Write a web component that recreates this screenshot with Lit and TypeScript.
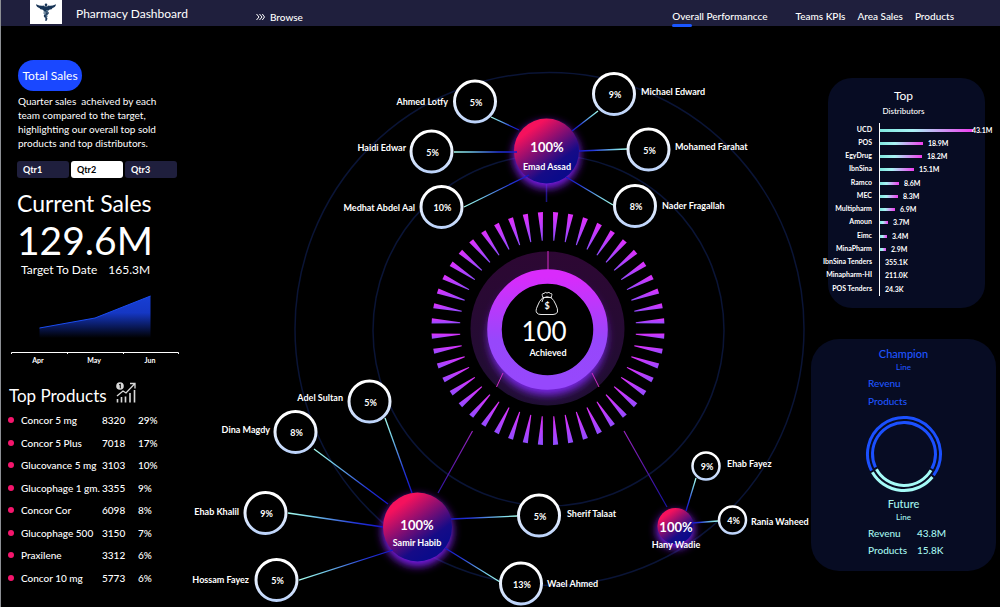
import { LitElement, html, svg, css } from "lit";
import { customElement, state } from "lit/decorators.js";

const FONT = css`Lato, "Open Sans", sans-serif`;

@customElement("top-bar")
class TopBar extends LitElement {
  static styles = css`
    :host { display: block; font-family: ${FONT}; color: #fff; }
    header { display: flex; align-items: center; height: 26px; background: #1f1f3d; padding: 0 46px 0 29px; }
    .logo { width: 32px; height: 24px; background: #fff; align-self: flex-start; }
    h1 { margin: 2px 0 0 14px; font-size: 12px; font-weight: 400; line-height: 16px; }
    .browse { display: flex; align-items: center; gap: 5px; margin: 8px 0 0 68px; }
    a { color: #fff; text-decoration: none; font-size: 10px; line-height: 14px; font-weight: 500; }
    nav { margin-left: auto; display: flex; align-items: flex-start; padding-top: 6px; gap: 12px; }
    .on { margin-right: 16px; }
    .on::after { content: ""; display: block; width: 20px; height: 3px; border-radius: 2px; background: #1a56ff; margin-top: 1px; margin-bottom: -4px; }
  `;
  render() {
    return html`<header>
      <svg class="logo" viewBox="0 0 32 24" aria-hidden="true">
        <g fill="#173456"><path d="M6 4.300 Q11 6.500 14 5.500 Q15 7 16 7 Q17 7 18 5.500 Q21 6.500 26 4.300 Q25.500 7.500 22.500 7.900 Q22 9.500 20 9.600 Q18 10.800 16.500 10 L15.500 10 Q14 10.800 12 9.600 Q10 9.500 9.500 7.900 Q6.500 7.500 6 4.300Z"/><circle cx="16" cy="4.800" r="1.300"/></g>
        <path d="M16 5V21M13.500 10.500Q20 12 17.500 14Q13 15 15 17Q18 18 16 20" fill="none" stroke="#173456" stroke-width="1.300"/>
        <path d="M18.500 10.500Q12 12 14.500 14Q18 15 17 17" fill="none" stroke="#3d6380" stroke-width="1"/>
      </svg>
      <h1>Pharmacy Dashboard</h1>
      <div class="browse">
        <svg width="9" height="8" viewBox="0 0 9 8" aria-hidden="true"><path d="M.5 1L3 4L.5 7M3.500 1L6 4L3.500 7M6.300 1L8.500 4L6.300 7" fill="none" stroke="#fff"/></svg>
        <a href="#browse">Browse</a>
      </div>
      <nav>
        <a class="on" href="#overall">Overall Performancce</a><a href="#teams">Teams KPIs</a><a href="#area">Area Sales</a><a href="#products">Products</a>
      </nav>
    </header>`;
  }
}

const PRODUCTS = [
  ["Concor 5 mg", "8320", "29%"], ["Concor 5 Plus", "7018", "17%"], ["Glucovance 5 mg", "3103", "10%"],
  ["Glucophage 1 gm.", "3355", "9%"], ["Concor Cor", "6098", "8%"], ["Glucophage 500", "3150", "7%"],
  ["Praxilene", "3312", "6%"], ["Concor 10 mg", "5773", "6%"],
];

@customElement("sales-panel")
class SalesPanel extends LitElement {
  @state() quarter = "Qtr2";
  static styles = css`
    :host { display: block; font-family: ${FONT}; color: #fff; }
    .pill { display: block; margin: 34px 0 0 17px; width: 64px; height: 31px; padding: 0; border: 0; border-radius: 16px; background: #1a48ff; color: #fff; font: 400 12px ${FONT}; white-space: nowrap; }
    .about { margin: 3px 0 0 17px; font-size: 10px; line-height: 14px; white-space: pre-line; }
    .tabs { display: flex; gap: 2px; margin: 11px 0 0 16px; }
    .tabs button { width: 52px; height: 17px; border: 0; border-radius: 3px; background: #1f1f3d; color: #fff; padding: 0 0 0 6px; text-align: left; font: 700 9px ${FONT}; }
    .tabs button.on { background: #fff; color: #000; }
    h2 { margin: 11px 0 0 16px; font-size: 23px; line-height: 28px; font-weight: 400; white-space: nowrap; }
    .big { margin: 2px 0 0 16px; font-size: 39px; line-height: 43px; white-space: nowrap; }
    .target { margin: 0 0 0 20px; font-size: 12px; line-height: 15px; display: flex; gap: 11px; white-space: nowrap; }
    .area { display: block; width: 170px; height: 63px; margin: 15px 0 0 9px; }
    .months { display: grid; grid-template-columns: repeat(3, 1fr); width: 168px; margin: 0 0 0 9px; text-align: center; font-size: 7px; line-height: 10px; font-weight: 700; }
    .head { display: flex; align-items: center; gap: 9px; margin: 17px 0 0 8px; }
    .head h2 { margin: 0; font-size: 17px; line-height: 24px; }
    .head svg { margin-bottom: 6px; }
    table { border-collapse: collapse; margin: 0 0 0 7px; font-size: 10px; }
    td, th { padding: 0; line-height: 22px; text-align: left; font-weight: 500; white-space: nowrap; }
    tr { height: 22px; }
    tr:nth-child(even) { height: 23px; }
    .dot { width: 13px; } .dot i { display: block; width: 6px; height: 6px; border-radius: 3px; background: #f5156c; }
    .name { width: 81px; } .qty { width: 36px; }
  `;
  render() {
    return html`
      <button class="pill">Total Sales</button>
      <p class="about">Quarter sales \u00a0acheived by each
team compared to the target,
highlighting our overall top sold
products and top distributors.</p>
      <div class="tabs">${["Qtr1", "Qtr2", "Qtr3"].map(q => html`<button class=${q === this.quarter ? "on" : ""} @click=${() => (this.quarter = q)}>${q}</button>`)}</div>
      <h2>Current Sales</h2>
      <div class="big">129.6M</div>
      <div class="target"><span>Target To Date</span><span>165.3M</span></div>
      <svg class="area" viewBox="0 0 170 63" aria-hidden="true">
        <defs><linearGradient id="a" x1="0" y1="0" x2="0" y2="1"><stop offset="0" stop-color="#173fd4"/><stop offset=".4" stop-color="#1537c4"/><stop offset="1" stop-color="#000"/></linearGradient></defs>
        <path d="M29.500 36L85 26L140.500 4V46H29.500Z" fill="url(#a)"/>
        <path d="M29.500 36L85 26L140.500 4" fill="none" stroke="#1a4cf0" stroke-width="1"/>
        <path d="M1.500 62V60.500H168.500V62M57.500 60V62M113.500 60V62" fill="none" stroke="#fff"/>
      </svg>
      <div class="months"><span>Apr</span><span>May</span><span>Jun</span></div>
      <div class="head"><h2>Top Products</h2>
        <svg width="20" height="21" viewBox="0 0 20 21" aria-hidden="true">
          <circle cx="4" cy="4" r="3.800" fill="#d9d9d9"/><path d="M3 3L4.300 2V6.300" fill="none" stroke="#000" stroke-width="1"/>
          <path d="M1 14L7 9L10 11L18.500 2M14 1.500H19V6.500" fill="none" stroke="#d9d9d9" stroke-width="1.300"/>
          <path d="M1.500 17V20.500M5.500 15V20.500M9.500 14.500V20.500M14 11V20.500M18.500 8V20.500" stroke="#d9d9d9" stroke-width="1.600"/>
        </svg></div>
      <table><tbody>${PRODUCTS.map(([n, q, p]) => html`<tr><td class="dot"><i></i></td><th class="name" scope="row">${n}</th><td class="qty">${q}</td><td>${p}</td></tr>`)}</tbody></table>`;
  }
}

interface Member { name: string; pct: string; x: number; y: number; r: number; lx: number; ly: number; end?: boolean; from: [number, number]; to: [number, number]; }
const MEMBERS: Member[] = [
  { name: "Ahmed Lotfy", pct: "5%", x: 475, y: 101.500, r: 20.500, lx: 448, ly: 105, end: true, from: [519, 130], to: [491, 117] },
  { name: "Haidi Edwar", pct: "5%", x: 431.500, y: 151.500, r: 20.500, lx: 406, ly: 151, end: true, from: [517, 152], to: [454, 152] },
  { name: "Medhat Abdel Aal", pct: "10%", x: 441.500, y: 207, r: 20.500, lx: 415, ly: 211, end: true, from: [529, 175], to: [464, 207] },
  { name: "Michael Edward", pct: "9%", x: 614, y: 94, r: 20.500, lx: 641, ly: 95, from: [572, 131], to: [598, 111] },
  { name: "Mohamed Farahat", pct: "5%", x: 648.500, y: 149.500, r: 20.500, lx: 675, ly: 150, from: [579, 151], to: [627, 149] },
  { name: "Nader Fragallah", pct: "8%", x: 635, y: 206, r: 20.500, lx: 662, ly: 209, from: [566, 177], to: [613, 205] },
  { name: "Adel Sultan", pct: "5%", x: 369.500, y: 401.500, r: 20.500, lx: 343, ly: 401, end: true, from: [412, 493], to: [385, 418] },
  { name: "Dina Magdy", pct: "8%", x: 295.500, y: 432, r: 20.500, lx: 270, ly: 433, end: true, from: [388, 504], to: [314, 449] },
  { name: "Ehab Khalil", pct: "9%", x: 265.500, y: 513, r: 20.500, lx: 239, ly: 515, end: true, from: [383, 527], to: [288, 513] },
  { name: "Hossam Fayez", pct: "5%", x: 276.500, y: 580, r: 20.500, lx: 249, ly: 583, end: true, from: [393, 550], to: [299, 580] },
  { name: "Sherif Talaat", pct: "5%", x: 539, y: 515.500, r: 20.500, lx: 567, ly: 517, from: [451, 519], to: [517, 516] },
  { name: "Wael Ahmed", pct: "13%", x: 521, y: 583.500, r: 20.500, lx: 547, ly: 587, from: [445, 548], to: [500, 582] },
  { name: "Ehab Fayez", pct: "9%", x: 706, y: 466, r: 13.500, lx: 727, ly: 467, from: [686, 511], to: [696, 478] },
  { name: "Rania Waheed", pct: "4%", x: 732.500, y: 520, r: 13.500, lx: 751, ly: 525, from: [692, 523], to: [718, 521] },
];
const LEADS = [
  { name: "Emad Assad", x: 546.500, y: 151, r: 32.500, px: 547, py: 152, ny: 170 },
  { name: "Samir Habib", x: 417.500, y: 527, r: 34.500, px: 417, py: 530, ny: 546 },
  { name: "Hany Wadie", x: 675.500, y: 526, r: 18, px: 676, py: 532, ny: 548 },
];

@customElement("team-map")
class TeamMap extends LitElement {
  static styles = css`
    :host { display: block; min-width: 0; }
    svg { display: block; width: 100%; height: auto; overflow: visible; font-family: ${FONT}; }
    text { fill: #fff; }
    .name { font-size: 9px; font-weight: 700; }
    .pct { font-size: 9px; font-weight: 700; text-anchor: middle; }
    .lead { font-size: 13px; font-weight: 700; text-anchor: middle; }
    .leadname { font-size: 9px; font-weight: 700; text-anchor: middle; }
    .score { font-size: 26px; text-anchor: middle; }
    .caption { font-size: 9px; font-weight: 700; text-anchor: middle; }
    .end { text-anchor: end; }
  `;
  render() {
    const spokes = Array.from({ length: 48 }, (_, i) => {
      const a = ((i + 0.5) * 7.5 * Math.PI) / 180;
      const at = (r: number, da: number) => {
        const x = 548 + r * Math.sin(a) + da * Math.cos(a);
        const y = 328.500 - r * Math.cos(a) + da * Math.sin(a);
        return `${x.toFixed(2)} ${y.toFixed(2)}`;
      };
      return `M${at(116.500, -2.600)}L${at(116.500, 2.600)}L${at(88, 0.500)}L${at(88, -0.500)}Z`;
    });
    return html`<svg viewBox="180 26 631 581" role="img" aria-label="Team achievement">
      <defs>
        <linearGradient id="rim" x1="0" y1="0" x2="0" y2="1"><stop offset=".2" stop-color="#fff"/><stop offset="1" stop-color="#bcd3fa"/></linearGradient>
        <linearGradient id="lead" x1=".2" y1=".1" x2=".75" y2=".85"><stop offset="0.1" stop-color="#f5115d"/><stop offset=".8" stop-color="#160b87"/><stop offset="1" stop-color="#0b0b8a"/></linearGradient>
        <linearGradient id="ring" x1="0" y1="0" x2="0" y2="1"><stop offset="0" stop-color="#d92bfb"/><stop offset=".6" stop-color="#9747fb"/><stop offset="1" stop-color="#9648fc"/></linearGradient>
        <linearGradient id="disc" x1="0" y1="0" x2="0" y2="1"><stop offset="0" stop-color="#2d0733"/><stop offset="1" stop-color="#1f0e33"/></linearGradient>
        <linearGradient id="spoke" x1="0" y1="0" x2="0" y2="1"><stop offset="0" stop-color="#e22ffb"/><stop offset="1" stop-color="#8f4dff"/></linearGradient>
        <filter id="glow" x="-50%" y="-50%" width="200%" height="200%"><feGaussianBlur stdDeviation="4"/></filter>
        <clipPath id="clip"><circle cx="547.500" cy="328.500" r="77"/></clipPath>
        ${MEMBERS.map((m, i) => svg`<linearGradient id=${"l" + i} gradientUnits="userSpaceOnUse" x1=${m.from[0]} y1=${m.from[1]} x2=${m.to[0]} y2=${m.to[1]}><stop offset="0" stop-color="#1414c8"/><stop offset=".3" stop-color="#2438d8"/><stop offset=".75" stop-color="#76cfe8"/><stop offset="1" stop-color="#a8fff0"/></linearGradient>`)}
        <linearGradient id="arm" gradientUnits="userSpaceOnUse" x1="0" y1="430" x2="0" y2="507"><stop offset="0" stop-color="#9a24c0"/><stop offset=".5" stop-color="#5a18a8"/><stop offset="1" stop-color="#1212a0"/></linearGradient>
      </defs>
      <g fill="none" stroke="#0a1436" stroke-width="1.500"><ellipse cx="549.500" cy="329" rx="254.500" ry="256.500"/><circle cx="548.500" cy="330.500" r="175.500"/></g>
      <path d="M472.500 431L438 493M624 431L667 507" stroke="url(#arm)" stroke-width="1.200"/>
      <path d="M546.500 182V202" stroke="#1c1582" stroke-width="1.500"/>
      ${LEADS.map(l => svg`<circle cx=${l.x} cy=${l.y + 4} r=${l.r + 1} fill="#7a1ee6" filter="url(#glow)"/><circle cx=${l.x} cy=${l.y} r=${l.r} fill="url(#lead)"/>`)}
      ${MEMBERS.map((m, i) => svg`
        <path d=${`M${m.from[0]} ${m.from[1]}L${m.to[0]} ${m.to[1] + 0.01}`} stroke=${`url(#l${i})`} stroke-width="1.300"/>
        <circle cx=${m.x} cy=${m.y} r=${m.r} fill="#000" stroke="url(#rim)" stroke-width=${m.r > 20 ? 3 : 2.500}/>
        <text class="pct" x=${m.x + 1} y=${m.y + 4}>${m.pct}</text>
        <text class=${m.end ? "name end" : "name"} x=${m.lx} y=${m.ly}>${m.name}</text>`)}
      ${LEADS.map(l => svg`<text class="lead" x=${l.px} y=${l.py}>100%</text><text class="leadname" x=${l.px} y=${l.ny}>${l.name}</text>`)}
      ${spokes.map(d => svg`<path d=${d} fill="url(#spoke)"/>`)}
      <circle cx="547.500" cy="328.500" r="77" fill="url(#disc)"/>
      <g clip-path="url(#clip)"><circle cx="547.500" cy="336" r="59" fill="#7a26e8" filter="url(#glow)"/></g>
      <path d="M548 251V270M503 373L496.500 387M592 373L599 387" stroke="#d42cc8" stroke-width="1"/>
      <circle cx="547.500" cy="329.500" r="53" fill="#000" stroke="url(#ring)" stroke-width="14.500"/>
      <g fill="none" stroke="#e8e8e8" stroke-width="1" stroke-linejoin="round">
        <path d="M543 297.500Q539 301 537.500 306Q535 311 537 313Q538 314.500 541 314.500H553Q556.500 314.500 557.500 312Q558 309 556 305Q554 300 551 297.500Z"/>
        <path d="M543 297.500Q541 293 544 293.500Q545 291.500 547 293Q549 291.500 550.500 293.500Q553 293 551 297.500M542.500 298Q547 295.500 552 298M544 298Q542 300 542 302"/>
      </g>
      <text class="pct" x="547" y="309">$</text>
      <text class="score" x="544" y="341">100</text>
      <text class="caption" x="548" y="356">Achieved</text>
    </svg>`;
  }
}

const DISTRIBUTORS: [string, string, number][] = [
  ["UCD", "43.1M", 93], ["POS", "18.9M", 43], ["EgyDrug", "18.2M", 42], ["IbnSina", "15.1M", 34], ["Ramco", "8.6M", 19],
  ["MEC", "8.3M", 18], ["Multipharm", "6.9M", 15], ["Amoun", "3.7M", 8], ["Eimc", "3.4M", 7], ["MinaPharm", "2.9M", 6],
  ["IbnSina Tenders", "355.1K", 0], ["Minapharm-HI", "211.0K", 0], ["POS Tenders", "24.3K", 0],
];

@customElement("distributor-card")
class DistributorCard extends LitElement {
  static styles = css`
    :host { display: block; margin: 52px 15px 0 17px; background: #070c23; border-radius: 24px; padding: 10px 0 13px; color: #fff; font-family: ${FONT}; }
    h2 { margin: 0; padding-right: 6px; text-align: center; font-size: 12px; line-height: 15px; font-weight: 400; }
    h3 { margin: 1px 0 0; padding-right: 6px; text-align: center; font-size: 8px; line-height: 15px; font-weight: 500; }
    ul { list-style: none; margin: 4px 0 0; padding: 0; }
    li { display: grid; grid-template-columns: 51px 1fr; height: 13px; font-size: 7px; line-height: 13px; font-weight: 700; white-space: nowrap; }
    li:nth-child(4n) { height: 14px; }
    .label { display: flex; justify-content: flex-end; padding-right: 7px; }
    .track { display: flex; align-items: center; border-left: 1px solid #fff; gap: 5px; min-width: 0; padding-top: 1px; }
    .bar { height: 3px; flex: none; background: linear-gradient(90deg, #7fe8df, #a9f3f5 35%, #f03cf0); }
    .long .bar { margin-right: -6px; }
  `;
  render() {
    return html`<h2>Top</h2><h3>Distributors</h3><ul>
      ${DISTRIBUTORS.map(([n, v, w]) => html`<li class=${w > 80 ? "long" : ""}><span class="label">${n}</span><span class="track"><span class="bar" style=${`width:${w}px`}></span><span>${v}</span></span></li>`)}
    </ul>`;
  }
}

@customElement("line-card")
class LineCard extends LitElement {
  static styles = css`
    :host { display: block; margin: 31px 4px 0 0; background: #070c23; border-radius: 28px; padding: 8px 0 12px; font-family: ${FONT}; color: #1f54ff; }
    h2 { margin: 0; text-align: center; font-size: 11px; line-height: 14px; font-weight: 500; }
    h3 { margin: 0; text-align: center; font-size: 8px; line-height: 12px; font-weight: 500; }
    dl { margin: 0 0 0 57px; display: grid; grid-template-columns: 49px 1fr; font-size: 10px; line-height: 17px; font-weight: 500; }
    dd { margin: 0; }
    .first { padding-top: 1px; line-height: 18px; }
    svg { display: block; width: 78px; height: 78px; margin: 5px auto 4px; }
    .future { color: #a5f5ef; }
    .future dl { padding-top: 2px; }
  `;
  render() {
    const pt = (r: number, deg: number) => `${(39 + r * Math.cos((deg * Math.PI) / 180)).toFixed(2)} ${(39 + r * Math.sin((deg * Math.PI) / 180)).toFixed(2)}`;
    const arc = (r: number, a: number, b: number, c: string) => svg`<path d=${`M${pt(r, a)}A${r} ${r} 0 ${b - a > 180 ? 1 : 0} 1 ${pt(r, b)}`} fill="none" stroke=${c} stroke-width="3"/>`;
    return html`<h2>Champion</h2><h3>Line</h3>
      <dl class="first"><dt>Revenu</dt><dd></dd><dt>Products</dt><dd></dd></dl>
      <svg viewBox="0 0 78 78" aria-hidden="true">
        ${arc(36.500, 153, 396, "#1b50ff")}${arc(36.500, 39, 150, "#a5fbf7")}
        ${arc(31.500, 155, 388, "#1b50ff")}${arc(31.500, 31, 151, "#a5fbf7")}
      </svg>
      <div class="future"><h2>Future</h2><h3>Line</h3>
      <dl><dt>Revenu</dt><dd>43.8M</dd><dt>Products</dt><dd>15.8K</dd></dl></div>`;
  }
}

@customElement("app-root")
class AppRoot extends LitElement {
  static styles = css`
    :host { display: block; min-height: 100vh; background: #000; border-left: 1px solid #8c8f94; box-sizing: border-box; overflow: hidden; }
    main { display: grid; grid-template-columns: 179px minmax(0, 1fr) 189px; align-items: start; }
  `;
  render() {
    return html`<top-bar></top-bar><main><sales-panel></sales-panel><team-map></team-map><aside><distributor-card></distributor-card><line-card></line-card></aside></main>`;
  }
}
